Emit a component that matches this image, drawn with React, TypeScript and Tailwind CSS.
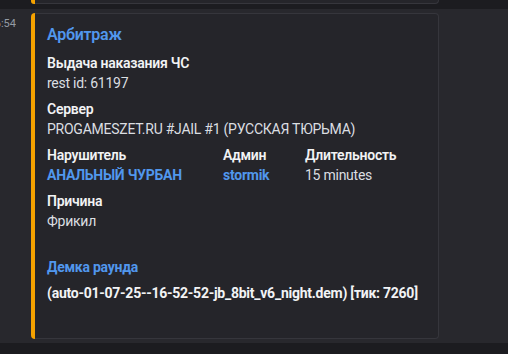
const font = { fontFamily: "Roboto, 'Noto Sans', sans-serif" };

function Field({
  name,
  children,
  className = "",
}: {
  name: React.ReactNode;
  children?: React.ReactNode;
  className?: string;
}) {
  return (
    <div className={`min-w-0 ${className}`}>
      <div className="mb-[2px] text-sm font-semibold leading-[18px] text-[#f2f3f5] whitespace-nowrap">
        {name}
      </div>
      <div className="text-sm leading-[18px] text-[#dbdee1] whitespace-nowrap">{children}</div>
    </div>
  );
}

export default function App() {
  return (
    <div className="relative h-[354px] w-[508px] overflow-hidden bg-[#1c1c20]" style={font}>
      {/* bottom of the previous message's embed */}
      <div className="flex h-[9px] items-start">
        <div className="w-[31px]" />
        <div className="flex h-[4px] w-[408px]">
          <div className="w-1 rounded-bl-[3px] bg-[#f5a200]" />
          <div className="flex-1 rounded-br-[4px] border-r border-b border-[#36363c] bg-[#25252a]" />
        </div>
      </div>

      {/* hovered message */}
      <div className="flex h-[334px] bg-[#28282d] pt-[4px]">
        <div className="mt-[3px] flex h-4 w-[16px] shrink-0 justify-end overflow-hidden">
          <span className="whitespace-nowrap text-[11px] leading-4 text-[#949ba4]">16:54</span>
        </div>

        <div className="ml-[15px] flex h-[326px] w-[408px] shrink-0">
          <div className="w-1 shrink-0 rounded-l-[4px] bg-[#f5a200]" />
          <div className="flex-1 rounded-r-[4px] border-y border-r border-[#36363c] bg-[#25252a] pt-[10px] pr-4 pb-4 pl-3 tracking-[-0.25px]">
            <div className="text-base font-semibold leading-[22px] text-[#5197ed]">Арбитраж</div>

            <div className="mt-2 grid grid-cols-[168px_74px_1fr] gap-x-2 gap-y-2">
              <Field name="Выдача наказания ЧС" className="col-span-3">
                rest id: 61197
              </Field>
              <Field name="Сервер" className="col-span-3">
                PROGAMESZET.RU #JAIL #1 (РУССКАЯ ТЮРЬМА)
              </Field>
              <Field name="Нарушитель">
                <span className="font-bold text-[#5197ed]">АНАЛЬНЫЙ ЧУРБАН</span>
              </Field>
              <Field name="Админ">
                <span className="font-bold text-[#5197ed]">stormik</span>
              </Field>
              <Field name="Длительность">15 minutes</Field>
              <Field name="Причина" className="col-span-3">
                Фрикил
              </Field>
              <Field name={"\u200b"} className="col-span-3">
                <span className="font-bold text-[#5197ed]">Демка раунда</span>
              </Field>
              <Field
                name={<span className="font-bold">(auto-01-07-25--16-52-52-jb_8bit_v6_night.dem) [тик: 7260]</span>}
                className="col-span-3"
              >
                {"\u200b"}
              </Field>
            </div>
          </div>
        </div>
      </div>
    </div>
  );
}
